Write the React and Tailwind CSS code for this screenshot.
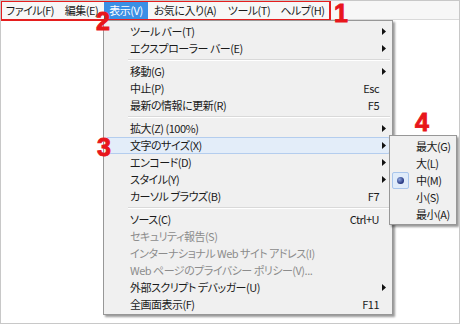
import React from "react";

const FONT = { fontFamily: '"Noto Sans CJK JP", "Noto Sans", sans-serif' };

function Arrow() {
  return (
    <svg width="4" height="7" viewBox="0 0 4 7" className="block">
      <path d="M0 0 L4 3.5 L0 7 Z" fill="#111" />
    </svg>
  );
}

const items = [
  { t: "ツール バー(T)", arrow: true },
  { t: "エクスプローラー バー(E)", arrow: true },
  "sep",
  { t: "移動(G)", arrow: true },
  { t: "中止(P)", sc: "Esc" },
  { t: "最新の情報に更新(R)", sc: "F5" },
  "sep",
  { t: "拡大(Z) (100%)", arrow: true },
  { t: "文字のサイズ(X)", arrow: true, hi: true },
  { t: "エンコード(D)", arrow: true },
  { t: "スタイル(Y)", arrow: true },
  { t: "カーソル ブラウズ(B)", sc: "F7" },
  "sep",
  { t: "ソース(C)", sc: "Ctrl+U" },
  { t: "セキュリティ報告(S)", dis: true },
  { t: "インターナショナル Web サイト アドレス(I)", dis: true },
  { t: "Web ページのプライバシー ポリシー(V)...", dis: true },
  { t: "外部スクリプト デバッガー(U)", arrow: true },
  { t: "全画面表示(F)", sc: "F11" },
];

const bar = [
  { t: "ファイル(F)", w: "w-[58px]" },
  { t: "編集(E)", w: "w-[45px]" },
  { t: "表示(V)", w: "w-[44px]", active: true },
  { t: "お気に入り(A)", w: "w-[74px]" },
  { t: "ツール(T)", w: "w-[54px]" },
  { t: "ヘルプ(H)", w: "w-[53px]" },
];

const sub = ["最大(G)", "大(L)", "中(M)", "小(S)", "最小(A)"];

function Num({ children, className }) {
  return (
    <div
      className={
        "absolute leading-none text-[25px] font-bold text-[#e8161b] [-webkit-text-stroke:0.9px_#e8161b] " +
        className
      }
      style={{ fontFamily: '"Liberation Sans", Arial, sans-serif' }}
    >
      {children}
    </div>
  );
}

export default function App() {
  return (
    <div
      className="relative w-[460px] h-[324px] bg-white border border-[#c8c8c8] overflow-hidden text-[11px] tracking-[-0.5px] text-[#1a1a1a] [font-feature-settings:'palt']"
      style={FONT}
    >
      {/* menu bar */}
      <div className="flex h-[19px] bg-[#f7f7f7] border-b border-[#dadada]">
        {bar.map((b) => (
          <div
            key={b.t}
            className={
              "flex items-center justify-center h-[18px] leading-none whitespace-nowrap " +
              b.w +
              (b.active ? " bg-[#3b8fe5] text-white" : "")
            }
          >
            {b.t}
          </div>
        ))}
      </div>
      <div className="absolute left-[-1px] top-[-1px] w-[331px] h-[21px] border-2 border-[#e51e1e]" />

      {/* dropdown menu */}
      <div className="absolute left-[102px] top-[19px] w-[290px] bg-[#f0f0f0] border border-[#979797] pt-[2px] pb-[1px] shadow-[2px_2px_2px_rgba(0,0,0,0.4)]">
        {items.map((it, i) =>
          it === "sep" ? (
            <div key={i} className="h-[6px] flex flex-col justify-center pl-[24px] pr-[2px]">
              <div className="h-px bg-[#d9d9d9]" />
              <div className="h-px bg-white" />
            </div>
          ) : (
            <div
              key={i}
              className={
                "flex items-center h-[17px] mx-[2px] border rounded-[2px] leading-none " +
                (it.hi
                  ? "bg-[#e3edf9] border-[#b4cdee]"
                  : "border-transparent") +
                (it.dis ? " text-[#8c8c8c]" : "")
              }
            >
              <div className="flex-1 pl-[23px] whitespace-nowrap">{it.t}</div>
              <div className="whitespace-nowrap">{it.sc || ""}</div>
              <div className="w-[10px] h-full flex items-center pl-[3px]">
                {it.arrow ? <Arrow /> : null}
              </div>
            </div>
          )
        )}
      </div>

      {/* submenu */}
      <div className="absolute left-[388px] top-[134px] w-[68px] bg-[#f0f0f0] border border-[#979797] pt-[2px] pb-[1px] shadow-[2px_2px_2px_rgba(0,0,0,0.4)]">
        {sub.map((s) => (
          <div key={s} className="flex items-center h-[17px] leading-none">
            <div className="w-[26px] h-full pl-[2px]">
              {s === "中(M)" ? (
                <div className="w-[17px] h-[17px] rounded-[2px] bg-[#e0ecfa] border border-[#a9c6ec] flex items-center justify-center">
                  <div className="w-[7px] h-[7px] rounded-full bg-[radial-gradient(circle_at_35%_35%,#8da6e0,#23347e_70%)]" />
                </div>
              ) : null}
            </div>
            <div className="whitespace-nowrap">{s}</div>
          </div>
        ))}
      </div>

      <Num className="left-[333px] top-[0px]">1</Num>
      <Num className="left-[95px] top-[8px]">2</Num>
      <Num className="left-[96px] top-[134px]">3</Num>
      <Num className="left-[414px] top-[109px]">4</Num>
    </div>
  );
}
